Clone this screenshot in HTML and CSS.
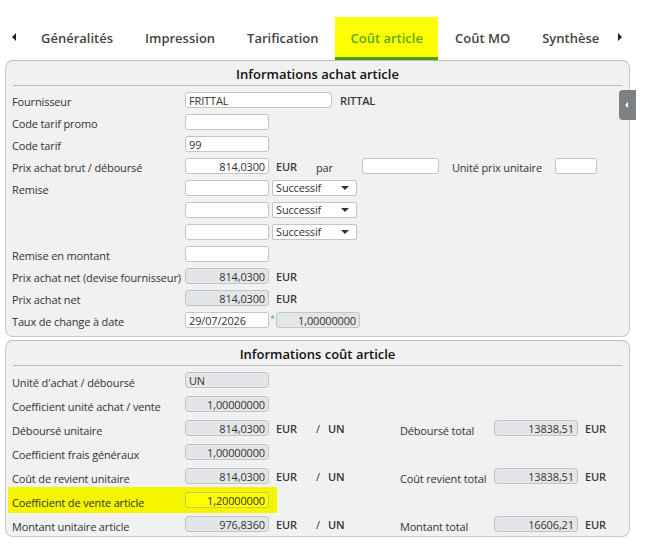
FILE: index.html
```html
<!DOCTYPE html>
<html lang="fr">
<head>
    <meta charset="UTF-8">
    <title>Coût article</title>
    <link rel="stylesheet" href="styles.css">
</head>
<body>
    <div class="tabs">
        <span class="tab-arrow left"></span>
        <span class="tab">Généralités</span>
        <span class="tab">Impression</span>
        <span class="tab">Tarification</span>
        <span class="tab active">Coût article</span>
        <span class="tab">Coût MO</span>
        <span class="tab">Synthèse</span>
        <span class="tab-arrow right"></span>
    </div>

    <div class="page">
        <div class="side-handle"></div>

        <div class="panel achat">
            <div class="panel-title">Informations achat article</div>

            <div class="row">
                <label>Fournisseur</label>
                <input class="field wide" type="text" value="FRITTAL">
                <span class="unit name">RITTAL</span>
            </div>
            <div class="row">
                <label>Code tarif promo</label>
                <input class="field" type="text" value="">
            </div>
            <div class="row">
                <label>Code tarif</label>
                <input class="field" type="text" value="99">
            </div>
            <div class="row">
                <label>Prix achat brut / déboursé</label>
                <input class="field num" type="text" value="814,0300">
                <span class="unit">EUR</span>
                <span class="par">par</span>
                <input class="field mid" type="text" value="">
                <span class="extra-label">Unité prix unitaire</span>
                <input class="field small" type="text" value="">
            </div>
            <div class="row">
                <label>Remise</label>
                <input class="field" type="text" value="">
                <div class="select">Successif</div>
            </div>
            <div class="row">
                <label></label>
                <input class="field" type="text" value="">
                <div class="select">Successif</div>
            </div>
            <div class="row">
                <label></label>
                <input class="field" type="text" value="">
                <div class="select">Successif</div>
            </div>
            <div class="row">
                <label>Remise en montant</label>
                <input class="field" type="text" value="">
            </div>
            <div class="row">
                <label>Prix achat net (devise fournisseur)</label>
                <input class="field num ro" type="text" value="814,0300" readonly>
                <span class="unit">EUR</span>
            </div>
            <div class="row">
                <label>Prix achat net</label>
                <input class="field num ro" type="text" value="814,0300" readonly>
                <span class="unit">EUR</span>
            </div>
            <div class="row">
                <label>Taux de change à date</label>
                <input class="field" type="text" value="29/07/2026">
                <span class="star">*</span>
                <input class="field num ro" type="text" value="1,00000000" readonly>
            </div>
        </div>

        <div class="panel cout">
            <div class="panel-title">Informations coût article</div>

            <div class="row">
                <label>Unité d'achat / déboursé</label>
                <input class="field ro" type="text" value="UN" readonly>
            </div>
            <div class="row">
                <label>Coefficient unité achat / vente</label>
                <input class="field num ro" type="text" value="1,00000000" readonly>
            </div>
            <div class="row">
                <label>Déboursé unitaire</label>
                <input class="field num ro" type="text" value="814,0300" readonly>
                <span class="unit">EUR</span>
                <span class="slash">/</span>
                <span class="per">UN</span>
                <span class="total-label">Déboursé total</span>
                <input class="field num ro" type="text" value="13838,51" readonly>
                <span class="unit">EUR</span>
            </div>
            <div class="row">
                <label>Coefficient frais généraux</label>
                <input class="field num ro" type="text" value="1,00000000" readonly>
            </div>
            <div class="row">
                <label>Coût de revient unitaire</label>
                <input class="field num ro" type="text" value="814,0300" readonly>
                <span class="unit">EUR</span>
                <span class="slash">/</span>
                <span class="per">UN</span>
                <span class="total-label">Coût revient total</span>
                <input class="field num ro" type="text" value="13838,51" readonly>
                <span class="unit">EUR</span>
            </div>
            <div class="row">
                <div class="highlight">
                    <label>Coefficient de vente article</label>
                    <input class="field num marked" type="text" value="1,20000000">
                </div>
            </div>
            <div class="row">
                <label>Montant unitaire article</label>
                <input class="field num ro" type="text" value="976,8360" readonly>
                <span class="unit">EUR</span>
                <span class="slash">/</span>
                <span class="per">UN</span>
                <span class="total-label">Montant total</span>
                <input class="field num ro" type="text" value="16606,21" readonly>
                <span class="unit">EUR</span>
            </div>
        </div>
    </div>
</body>
</html>
```

FILE: styles.css
```css
body {
    margin: 0;
    padding: 0;
    font-family: "Open Sans", "DejaVu Sans", sans-serif;
    font-size: 11px;
    letter-spacing: -0.15px;
    color: #333;
    background-color: #fff;
}

/* tab bar */
.tabs {
    display: flex;
    align-items: flex-end;
    height: 60px;
    padding-left: 12px;
    white-space: nowrap;
}
.tab {
    height: 43px;
    line-height: 43px;
    padding: 0 15px 0 16px;
    margin-right: 1px;
    font-size: 13px;
    font-weight: 600;
    letter-spacing: 0;
    color: #444;
    box-sizing: border-box;
}
.tab.active {
    background-color: #ffff00;
    color: #5aa81c;
    border-bottom: 3px solid #4a9e16;
    line-height: 42px;
}
.tab-arrow {
    width: 0;
    height: 0;
    margin-bottom: 19px;
    border-top: 4px solid transparent;
    border-bottom: 4px solid transparent;
}
.tab-arrow.left { border-right: 4px solid #222; margin-right: 9px; }
.tab-arrow.right { border-left: 4px solid #222; margin-left: 3px; }

/* panels */
.page {
    position: relative;
    padding: 0 15px 0 5px;
}
.side-handle {
    position: absolute;
    top: 30px;
    left: 619px;
    width: 17px;
    height: 30px;
    background-color: #7c8186;
    border-radius: 4px 0 0 4px;
    z-index: 2;
}
.side-handle::after {
    content: "";
    position: absolute;
    top: 12px;
    left: 6px;
    border-top: 3px solid transparent;
    border-bottom: 3px solid transparent;
    border-right: 3px solid #fff;
}

.panel {
    background-color: #f1f1f1;
    border: 1px solid #c9c9c9;
    border-top-color: #bdbdbd;
    border-radius: 8px;
    padding: 0 6px;
    margin-bottom: 3px;
}
.panel.achat { padding-bottom: 5px; }
.panel.achat .panel-title { margin-bottom: 3px; }
.panel.cout .panel-title { margin-bottom: 2px; }
.panel.cout .row label { padding-top: 4px; }

.panel-title {
    height: 24px;
    line-height: 26px;
    text-align: center;
    font-size: 13px;
    font-weight: 600;
    letter-spacing: 0;
    color: #111;
    border-bottom: 1px solid #bfbfbf;
    margin: 0 1px 0 1px;
}

.row {
    display: flex;
    align-items: center;
    height: 22px;
    white-space: nowrap;
}
.cout .row { height: 24px; }

.row label {
    width: 173px;
    flex-shrink: 0;
    padding-top: 3px;
    color: #333;
}

.field {
    width: 84px;
    height: 16px;
    box-sizing: border-box;
    border: 1px solid #c4c4c4;
    border-radius: 3px;
    background-color: #fff;
    font-family: inherit;
    font-size: 11px;
    letter-spacing: -0.15px;
    color: #333;
    padding: 0 3px;
    margin: 0;
}
.field.wide { width: 147px; }
.field.mid { width: 77px; }
.field.small { width: 42px; }
.field.num { text-align: right; }
.field.ro { background-color: #e3e6e9; }
.field.marked { background-color: #ffff00; border-color: #c9c95a; }

.unit {
    margin-left: 7px;
    font-weight: 600;
    color: #3a3a3a;
}
.unit.name { margin-left: 8px; }
.par { margin-left: 19px; padding-top: 3px; width: 46px; }
.extra-label { margin-left: 13px; width: 103px; padding-top: 3px; }

.select {
    position: relative;
    width: 85px;
    height: 16px;
    box-sizing: border-box;
    margin-left: 3px;
    border: 1px solid #c4c4c4;
    border-radius: 2px;
    background-color: #fff;
    line-height: 14px;
    padding-left: 3px;
    color: #333;
}
.select::after {
    content: "";
    position: absolute;
    right: 7px;
    top: 5px;
    border-left: 4px solid transparent;
    border-right: 4px solid transparent;
    border-top: 4px solid #333;
}

.star {
    width: 6px;
    margin-left: 1px;
    color: #62b133;
    font-size: 9px;
    align-self: flex-start;
    padding-top: 3px;
}

.slash { margin-left: 19px; width: 12px; color: #333; }
.per { font-weight: 600; width: 72px; }
.total-label { width: 94px; padding-top: 4px; }

.highlight {
    display: flex;
    align-items: center;
    height: 26px;
    margin-left: -4px;
    padding-left: 4px;
    width: 265px;
    background-color: #f5f500;
}
```
